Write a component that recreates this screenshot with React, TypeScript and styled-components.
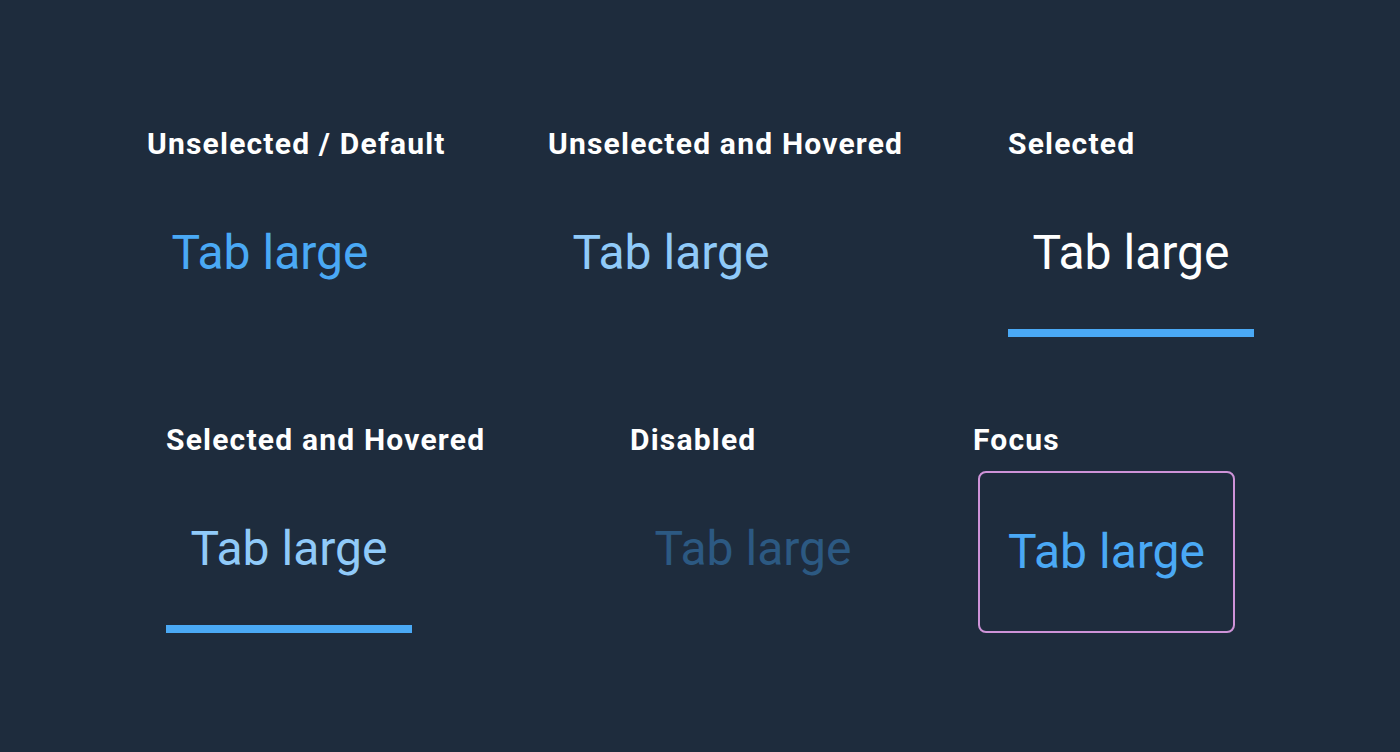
import React from "react";
import styled, { createGlobalStyle } from "styled-components";

const GlobalStyle = createGlobalStyle`
  html, body {
    margin: 0;
    padding: 0;
    background-color: #1e2c3d;
  }
  body {
    font-family: Roboto, "Liberation Sans", sans-serif;
  }
`;

const Page = styled.div`
  width: 1400px;
  height: 752px;
  box-sizing: border-box;
  padding-top: 128px;
  display: flex;
  flex-direction: column;
  gap: 87px;
  background-color: #1e2c3d;
  overflow: hidden;
`;

const Row = styled.div<{ $offset: number; $columns: string }>`
  display: grid;
  grid-template-columns: ${(p) => p.$columns};
  padding-left: ${(p) => p.$offset}px;
`;

const Cell = styled.div`
  display: flex;
  flex-direction: column;
  align-items: flex-start;
  gap: 16px;
`;

const Label = styled.div`
  font-size: 30px;
  line-height: 32px;
  font-weight: 700;
  letter-spacing: 1.2px;
  color: #ffffff;
  white-space: nowrap;
`;

type Variant = "default" | "hover" | "selected" | "selectedHover" | "disabled";

const textColors: Record<Variant, string> = {
  default: "#4aa9f5",
  hover: "#90caf9",
  selected: "#ffffff",
  selectedHover: "#90caf9",
  disabled: "#2c5982",
};

const Tab = styled.div`
  width: 246px;
  height: 161px;
  display: flex;
  flex-direction: column;
`;

const TabText = styled.span<{ $variant: Variant }>`
  flex: 1;
  display: flex;
  align-items: center;
  justify-content: center;
  font-size: 48px;
  line-height: 56px;
  font-weight: 400;
  color: ${(p) => textColors[p.$variant]};
  white-space: nowrap;
`;

const Indicator = styled.div<{ $visible: boolean }>`
  height: 8px;
  background-color: ${(p) => (p.$visible ? "#4aa9f5" : "transparent")};
`;

const FocusTab = styled.div`
  width: 257px;
  height: 162px;
  box-sizing: border-box;
  margin: -1px 0 0 5px;
  border: 2px solid #ce93d8;
  border-radius: 8px;
  display: flex;
  align-items: center;
  justify-content: center;
  font-size: 48px;
  line-height: 56px;
  color: #4aa9f5;
  white-space: nowrap;
`;

function TabDemo({ label, variant }: { label: string; variant: Variant }) {
  const selected = variant === "selected" || variant === "selectedHover";
  return (
    <Cell>
      <Label>{label}</Label>
      <Tab>
        <TabText $variant={variant}>Tab large</TabText>
        <Indicator $visible={selected} />
      </Tab>
    </Cell>
  );
}

export default function App() {
  return (
    <>
      <GlobalStyle />
      <Page>
        <Row $offset={147} $columns="401px 460px auto">
          <TabDemo label="Unselected / Default" variant="default" />
          <TabDemo label="Unselected and Hovered" variant="hover" />
          <TabDemo label="Selected" variant="selected" />
        </Row>
        <Row $offset={166} $columns="464px 343px auto">
          <TabDemo label="Selected and Hovered" variant="selectedHover" />
          <TabDemo label="Disabled" variant="disabled" />
          <Cell>
            <Label>Focus</Label>
            <FocusTab>Tab large</FocusTab>
          </Cell>
        </Row>
      </Page>
    </>
  );
}
